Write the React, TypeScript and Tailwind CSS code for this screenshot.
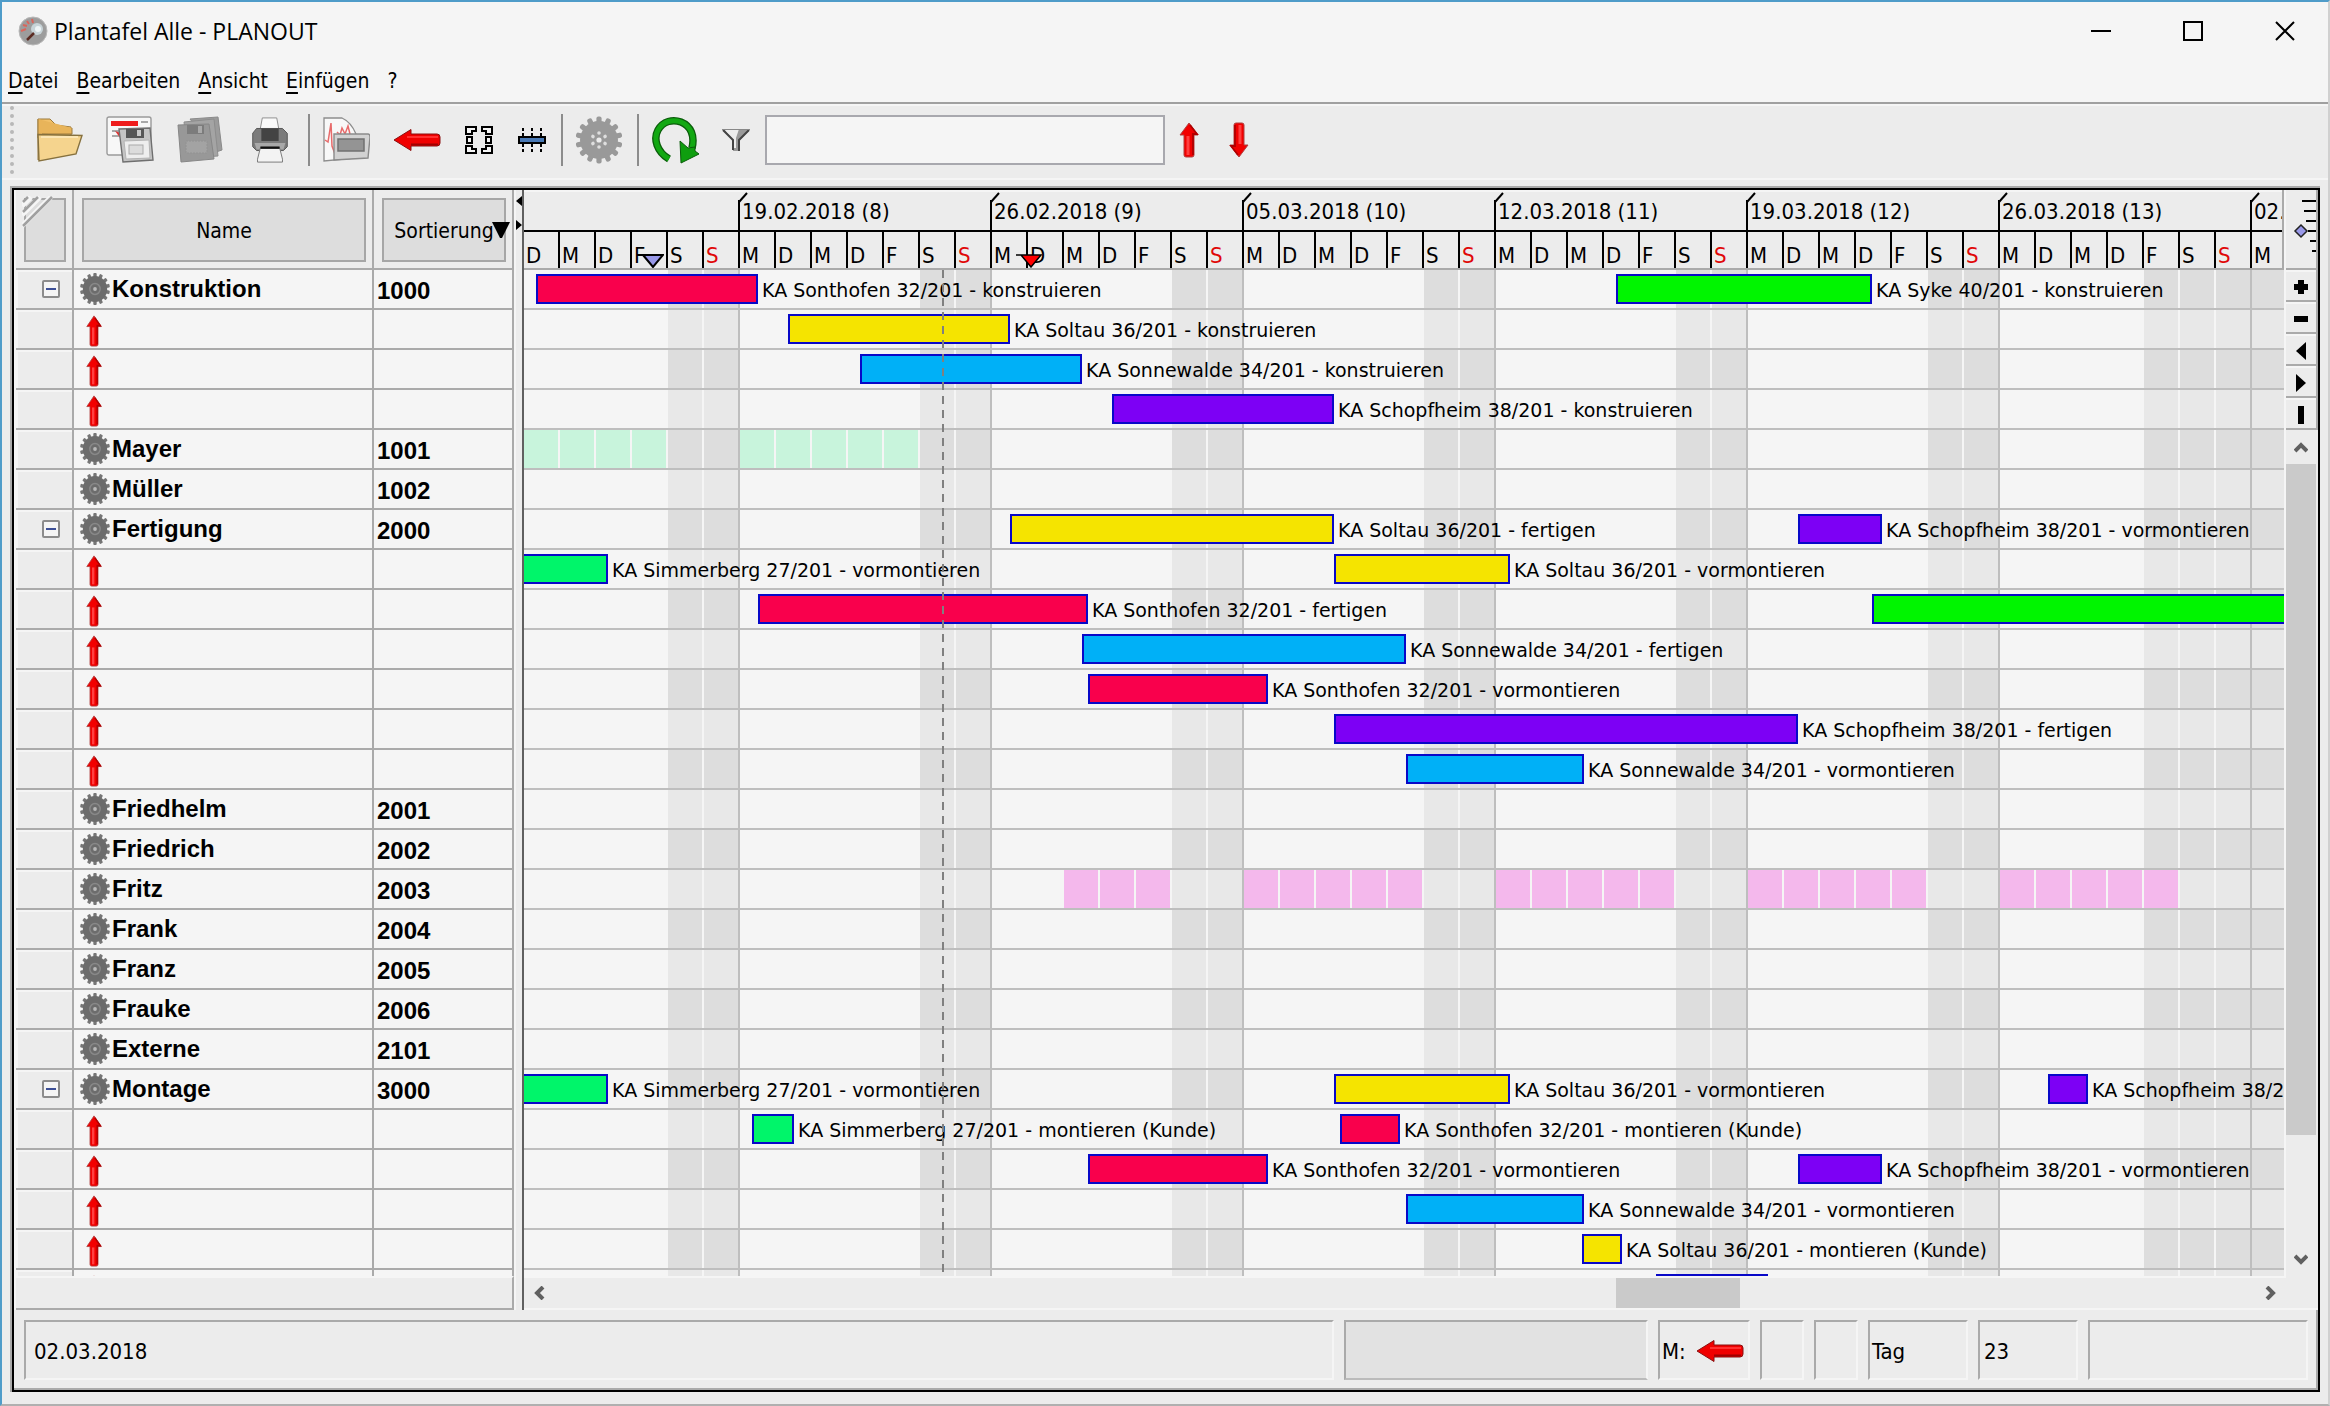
import React from 'react';
import clsx from 'clsx';

interface Bar {
  start: number;
  width: number;
  color: string;
  label?: string;
}

interface Row {
  name?: string;
  sort?: string;
  open?: boolean;
  bars?: Bar[];
  capacity?: { color: string; days: number[] };
}

const RED = 'bg-[#f9004c]';
const YELLOW = 'bg-[#f5e400]';
const BLUE = 'bg-[#00b0f7]';
const VIOLET = 'bg-[#7d00f5]';
const GREEN = 'bg-[#00f500]';
const MINT = 'bg-[#00f56a]';

const UI_FONT = "font-['DejaVu_Sans_Condensed','DejaVu_Sans',sans-serif]";

// bar positions are pixels from the left edge of the chart, one day is 36px
const ROWS: Row[] = [
  {
    name: 'Konstruktion',
    sort: '1000',
    open: true,
    bars: [
      { start: 12, width: 222, color: RED, label: 'KA Sonthofen 32/201 - konstruieren' },
      { start: 1092, width: 256, color: GREEN, label: 'KA Syke 40/201 - konstruieren' },
    ],
  },
  { bars: [{ start: 264, width: 222, color: YELLOW, label: 'KA Soltau 36/201 - konstruieren' }] },
  { bars: [{ start: 336, width: 222, color: BLUE, label: 'KA Sonnewalde 34/201 - konstruieren' }] },
  { bars: [{ start: 588, width: 222, color: VIOLET, label: 'KA Schopfheim 38/201 - konstruieren' }] },
  { name: 'Mayer', sort: '1001', capacity: { color: 'bg-[#c8f4dc]', days: [0, 1, 2, 3, 6, 7, 8, 9, 10] } },
  { name: 'Müller', sort: '1002' },
  {
    name: 'Fertigung',
    sort: '2000',
    open: true,
    bars: [
      { start: 486, width: 324, color: YELLOW, label: 'KA Soltau 36/201 - fertigen' },
      { start: 1274, width: 84, color: VIOLET, label: 'KA Schopfheim 38/201 - vormontieren' },
    ],
  },
  {
    bars: [
      { start: -10, width: 94, color: MINT, label: 'KA Simmerberg 27/201 - vormontieren' },
      { start: 810, width: 176, color: YELLOW, label: 'KA Soltau 36/201 - vormontieren' },
    ],
  },
  {
    bars: [
      { start: 234, width: 330, color: RED, label: 'KA Sonthofen 32/201 - fertigen' },
      { start: 1348, width: 600, color: GREEN },
    ],
  },
  { bars: [{ start: 558, width: 324, color: BLUE, label: 'KA Sonnewalde 34/201 - fertigen' }] },
  { bars: [{ start: 564, width: 180, color: RED, label: 'KA Sonthofen 32/201 - vormontieren' }] },
  { bars: [{ start: 810, width: 464, color: VIOLET, label: 'KA Schopfheim 38/201 - fertigen' }] },
  { bars: [{ start: 882, width: 178, color: BLUE, label: 'KA Sonnewalde 34/201 - vormontieren' }] },
  { name: 'Friedhelm', sort: '2001' },
  { name: 'Friedrich', sort: '2002' },
  {
    name: 'Fritz',
    sort: '2003',
    capacity: {
      color: 'bg-[#f4b8ec]',
      days: [15, 16, 17, 20, 21, 22, 23, 24, 27, 28, 29, 30, 31, 34, 35, 36, 37, 38, 41, 42, 43, 44, 45],
    },
  },
  { name: 'Frank', sort: '2004' },
  { name: 'Franz', sort: '2005' },
  { name: 'Frauke', sort: '2006' },
  { name: 'Externe', sort: '2101' },
  {
    name: 'Montage',
    sort: '3000',
    open: true,
    bars: [
      { start: -10, width: 94, color: MINT, label: 'KA Simmerberg 27/201 - vormontieren' },
      { start: 810, width: 176, color: YELLOW, label: 'KA Soltau 36/201 - vormontieren' },
      { start: 1524, width: 40, color: VIOLET, label: 'KA Schopfheim 38/201 - vormontieren' },
    ],
  },
  {
    bars: [
      { start: 228, width: 42, color: MINT, label: 'KA Simmerberg 27/201 - montieren (Kunde)' },
      { start: 816, width: 60, color: RED, label: 'KA Sonthofen 32/201 - montieren (Kunde)' },
    ],
  },
  {
    bars: [
      { start: 564, width: 180, color: RED, label: 'KA Sonthofen 32/201 - vormontieren' },
      { start: 1274, width: 84, color: VIOLET, label: 'KA Schopfheim 38/201 - vormontieren' },
    ],
  },
  { bars: [{ start: 882, width: 178, color: BLUE, label: 'KA Sonnewalde 34/201 - vormontieren' }] },
  { bars: [{ start: 1058, width: 40, color: YELLOW, label: 'KA Soltau 36/201 - montieren (Kunde)' }] },
  { bars: [{ start: 1132, width: 112, color: VIOLET }] },
];

const WEEKS = [
  '19.02.2018 (8)',
  '26.02.2018 (9)',
  '05.03.2018 (10)',
  '12.03.2018 (11)',
  '19.03.2018 (12)',
  '26.03.2018 (13)',
  '02.04.2018 (14)',
];

const DAY_LETTERS = ['D', 'M', 'D', 'F', 'S', 'S', 'M'];
// the chart starts on Tuesday 13.02.2018
const DAYS = Array.from({ length: 49 }, (_, i) => i);
const isSunday = (day: number) => day % 7 === 5;
// weekends, Good Friday and Easter Monday
const isFree = (day: number) => day % 7 === 4 || isSunday(day) || day === 45 || day === 48;

const GearIcon = ({ className }: { className?: string }) => (
  <svg viewBox="0 0 32 32" preserveAspectRatio="none" className={className} aria-hidden="true">
    {Array.from({ length: 14 }, (_, i) => (
      <rect key={i} x="14.2" y="0" width="3.6" height="6" rx="1" fill="#767676" transform={`rotate(${(i * 360) / 14} 16 16)`} />
    ))}
    <circle cx="16" cy="16" r="13" fill="#6c6c6c" />
    <circle cx="16" cy="16" r="5.5" fill="none" stroke="#888" strokeWidth="1.5" />
    <circle cx="16" cy="16" r="2" fill="#b8b8b8" />
  </svg>
);

const BigGearIcon = () => (
  <svg viewBox="0 0 48 48" className="size-12" aria-hidden="true">
    {Array.from({ length: 14 }, (_, i) => (
      <rect key={i} x="21.4" y="0.5" width="5.2" height="9" rx="2" fill="#999" transform={`rotate(${(i * 360) / 14} 24 24)`} />
    ))}
    <circle cx="24" cy="24" r="19" fill="#999" />
    {Array.from({ length: 6 }, (_, i) => (
      <circle key={i} cx="24" cy="17" r="1.8" fill="#dedede" transform={`rotate(${i * 60} 24 24)`} />
    ))}
    <circle cx="24" cy="24" r="2.6" fill="#ececec" />
  </svg>
);

const RedArrow = ({ className, down }: { className?: string; down?: boolean }) => (
  <svg viewBox="0 0 20 36" preserveAspectRatio="none" className={className} aria-hidden="true">
    <g transform={down ? 'rotate(180 10 18)' : undefined}>
      <path d="M10 1 L19 13 H15 V33 Q15 35 13 35 H7 Q5 35 5 33 V13 H1 Z" fill="#f20000" stroke="#b04040" strokeWidth="1" />
      <path d="M11 3 L18 12 H14 V33" fill="none" stroke="#b00000" strokeWidth="1.8" />
      <path d="M9 14 V33" stroke="#ff4040" strokeWidth="3" />
    </g>
  </svg>
);

const LeftArrow = () => (
  <svg viewBox="0 0 48 24" className="h-6 w-12" aria-hidden="true">
    <path d="M1 12 L18 1.5 V6 H44 Q47 6 47 9 V15 Q47 18 44 18 H18 V22.5 Z" fill="#f00000" stroke="#8a1010" />
    <path d="M18 16.500 H45" stroke="#a00000" strokeWidth="2" />
    <path d="M14 9 H45" stroke="#ff3030" strokeWidth="2" />
  </svg>
);

const FolderIcon = () => (
  <svg viewBox="0 0 48 48" className="size-12" aria-hidden="true">
    <path d="M2 3 L14 3 L20 9 L35 11 V22 H2 Z" fill="#f1c069" stroke="#9c7a3c" />
    <path d="M2 3 V44 L6 40 V18 H36 V12" fill="#e8b45a" stroke="#9c7a3c" />
    <path d="M2 18.500 L46 19.500 L40 38 L3 45 Z" fill="#f5d48e" stroke="#86713f" strokeWidth="1.4" />
    <path d="M5 21 H42" stroke="#fbe6b5" strokeWidth="2" />
  </svg>
);

const SaveReportIcon = () => (
  <svg viewBox="0 0 48 48" className="size-12" aria-hidden="true">
    <rect x="1" y="1" width="44" height="38" rx="2" fill="#f7f7f7" stroke="#9a9a9a" strokeWidth="1.4" />
    <rect x="5" y="5" width="27" height="5" fill="#ee1c1c" />
    <path d="M6 15 H16 M35 6 H42 M6 20 H14" stroke="#a8a8a8" strokeWidth="2" />
    <path d="M9 15 L15 17 V23 Z" fill="#d33" />
    <path d="M13 13 L44 12 L47 44 L17 46 Z" fill="#c4c4c4" stroke="#6f6f6f" strokeWidth="1.4" />
    <path d="M20 13 H38 V22 H20 Z" fill="#565656" />
    <path d="M31 14 H35 V20 H31 Z" fill="#c9c9c9" />
    <path d="M18 25 L43 24 L44 42 L20 43 Z" fill="#eee" stroke="#b4b4b4" />
    <rect x="23" y="29" width="14" height="9" fill="#dcdcdc" stroke="#aaa" />
  </svg>
);

const SaveAllIcon = () => (
  <svg viewBox="0 0 48 48" className="size-12" aria-hidden="true">
    <path d="M14 3 L42 1 L46 34 L40 36 Z" fill="#9b9b9b" stroke="#8a8a8a" />
    <path d="M8 6 L38 3 L42 40 L12 42 Z" fill="#a4a4a4" stroke="#8d8d8d" />
    <path d="M2 9 L33 8 L38 43 L5 46 Z" fill="#989898" stroke="#878787" />
    <path d="M11 9 H28 V18 H11 Z" fill="#7c7c7c" />
    <path d="M22 10 H26 V17 H22 Z" fill="#aaa" />
    <rect x="10" y="25" width="21" height="12" fill="#a3a3a3" stroke="#929292" strokeDasharray="2 1" />
  </svg>
);

const PrinterIcon = () => (
  <svg viewBox="0 0 48 50" className="h-12 w-12" aria-hidden="true">
    <path d="M16 2 H31 L34 18 H13 Z" fill="#fafafa" stroke="#8d8d8d" />
    <path d="M10 13 H37 L42 18 V32 L38 36 H10 L6 32 V18 Z" fill="#7b7b7b" stroke="#555" />
    <path d="M15 13 H33 V26 H15 Z" fill="#434343" />
    <path d="M8 28 H40 L38 35 H10 Z" fill="#a8a8a8" />
    <path d="M14 33 H34 L37 45 V48 H11 V45 Z" fill="#f3f3f3" stroke="#777" />
    <path d="M14 33 H34" stroke="#111" strokeWidth="2.500" />
  </svg>
);

const ChartIcon = () => (
  <svg viewBox="0 0 48 48" className="size-12" aria-hidden="true">
    <path d="M2 2 H20 Q29 6 34 18 V42 L2 45 Z" fill="#f8f8f8" stroke="#8d8d8d" strokeWidth="1.300" />
    <path d="M3 24 L6 26 L9 7 L10 30 L13 38 M15 16 L18 19 L20 12 L23 18 L26 10 L28 18" fill="none" stroke="#e86a6a" strokeWidth="1.500" />
    <path d="M12 18 H46 Q48 18 48 21 L46 42 L12 44 Z" fill="#d2d2d2" stroke="#8a8a8a" strokeWidth="1.400" />
    <rect x="16" y="23" width="26" height="12" fill="#949494" stroke="#707070" strokeWidth="1.500" />
  </svg>
);

const FitIcon = () => (
  <svg viewBox="0 0 30 30" className="size-[30px]" fill="#f5f5f5" stroke="#000" strokeWidth="2" shapeRendering="crispEdges" aria-hidden="true">
    <path d="M2 2 H12 V6 H8 V9 H2 Z M18 2 H28 V9 H22 V6 H18 Z" />
    <path d="M3 12 H8 V18 H3 Z M22 12 H27 V18 H22 Z" />
    <path d="M2 21 H8 V24 H12 V28 H2 Z M22 21 H28 V28 H18 V24 H22 Z" />
  </svg>
);

const RowHeightIcon = () => (
  <svg viewBox="0 0 30 30" className="size-[30px]" fill="none" stroke="#000" strokeWidth="2" shapeRendering="crispEdges" aria-hidden="true">
    <rect x="2" y="12" width="26" height="6" fill="#4878b4" />
    <path d="M6 3 V11 M15 3 V11 M24 3 V11 M6 19 V27 M15 19 V27 M24 19 V27" strokeDasharray="3 2" />
  </svg>
);

const RefreshIcon = () => (
  <svg viewBox="0 0 48 48" className="size-12" aria-hidden="true">
    <path d="M18 43 C6 36 2 23 7 14 C12 5 22 3 30 6 C40 10 44 20 41 32" fill="none" stroke="#0a5c0a" strokeWidth="7.500" />
    <path d="M18 43 C6 36 2 23 7 14 C12 5 22 3 30 6 C40 10 44 20 41 32" fill="none" stroke="#12a812" strokeWidth="5" />
    <path d="M29 25 L30 47 L48 38 L44 35 V31 L37 32 Z" fill="#0f9e0f" stroke="#0a5c0a" />
  </svg>
);

const FunnelIcon = () => (
  <svg viewBox="0 0 30 24" className="h-6 w-[30px]" aria-hidden="true">
    <path d="M1 1 H29 L19 12 V23 H12 V12 Z" fill="#9a9a9a" />
    <path d="M3 1 H18 L15 10 V20 H12 V12 Z" fill="#ededed" />
    <path d="M28 2 L18 12 V23 M2 2 L12 12 V22" fill="none" stroke="#444" strokeWidth="2" />
    <path d="M1 1.500 H29" stroke="#888" />
  </svg>
);

const AppIcon = () => (
  <svg viewBox="0 0 30 30" className="size-[30px]" aria-hidden="true">
    <circle cx="15" cy="15" r="14" fill="#9d9d9d" stroke="#b9b9b9" />
    <circle cx="19" cy="13" r="6" fill="#c8d4d8" />
    <circle cx="20" cy="13" r="3" fill="#eef4f6" />
    <path d="M9 24 L16 17" stroke="#5b2b22" strokeWidth="2.500" />
    <path d="M3 15 L8 13 M5 9 L9 10 M9 5 L11 8 M14 3 L15 7" stroke="#d9665c" strokeWidth="2" />
  </svg>
);

const ToolButton = ({ label, className, children }: { label: string; className?: string; children: React.ReactNode }) => (
  <button type="button" aria-label={label} className={clsx('flex shrink-0 items-center justify-center', className)}>
    {children}
  </button>
);

const Separator = () => <div className="mr-3 ml-3.5 h-[52px] w-0.5 shrink-0 bg-[#8c8c8c]" />;

const TitleBar = () => (
  <div className="flex h-[60px] items-center bg-[#f5f5f5] pb-0.5 pl-4">
    <AppIcon />
    <h1 className="ml-1.5 flex-1 font-['Open_Sans',sans-serif] text-[23px] leading-8">Plantafel Alle - PLANOUT</h1>
    <div className="flex gap-1.5">
      <button type="button" aria-label="Minimieren" className="flex w-[86px] justify-center">
        <svg className="size-5" viewBox="0 0 20 20"><path d="M0 10 H20" stroke="#000" strokeWidth="2" /></svg>
      </button>
      <button type="button" aria-label="Maximieren" className="flex w-[86px] justify-center">
        <svg className="size-5" viewBox="0 0 20 20"><rect x="1" y="1" width="18" height="18" fill="none" stroke="#000" strokeWidth="2" /></svg>
      </button>
      <button type="button" aria-label="Schließen" className="flex w-[86px] justify-center">
        <svg className="size-5" viewBox="0 0 20 20"><path d="M1 1 L19 19 M19 1 L1 19" stroke="#000" strokeWidth="2" /></svg>
      </button>
    </div>
  </div>
);

const MENU = ['Datei', 'Bearbeiten', 'Ansicht', 'Einfügen'];

const MenuBar = () => (
  <nav className="flex h-[42px] items-center gap-[18px] border-b-2 border-[#a0a0a0] bg-[#f5f5f5] pb-0.5 pl-1.5 text-[21px] leading-7">
    {MENU.map((item) => (
      <button key={item} type="button">
        <span className="underline decoration-2 underline-offset-4">{item[0]}</span>
        {item.slice(1)}
      </button>
    ))}
    <button type="button">?</button>
  </nav>
);

const Toolbar = () => (
  <div className="flex h-[76px] items-center border-y-2 border-[#f5f5f5] pb-1 pl-2">
    <div className="mr-[22px] h-[68px] w-0 border-l-4 border-dotted border-[#b8b8b8]" />
    <div className="flex gap-[22px]">
      <ToolButton label="Öffnen"><FolderIcon /></ToolButton>
      <ToolButton label="Bericht speichern"><SaveReportIcon /></ToolButton>
      <ToolButton label="Speichern"><SaveAllIcon /></ToolButton>
      <ToolButton label="Drucken"><PrinterIcon /></ToolButton>
    </div>
    <Separator />
    <div className="flex gap-[23px]">
      <ToolButton label="Auslastung"><ChartIcon /></ToolButton>
      <ToolButton label="Zurück"><LeftArrow /></ToolButton>
      <ToolButton label="Einpassen"><FitIcon /></ToolButton>
      <ToolButton label="Zeilenhöhe"><RowHeightIcon /></ToolButton>
    </div>
    <Separator />
    <ToolButton label="Einstellungen"><BigGearIcon /></ToolButton>
    <Separator />
    <ToolButton label="Aktualisieren"><RefreshIcon /></ToolButton>
    <ToolButton label="Filter" className="ml-[22px]"><FunnelIcon /></ToolButton>
    <input type="text" aria-label="Suchen" className="ml-3.5 h-[50px] w-[400px] border-2 border-[#a8a8ae] bg-[#f5f5f5] px-2 text-[21px]" />
    <ToolButton label="Vorheriger Treffer" className="ml-3.5"><RedArrow className="h-9 w-5" /></ToolButton>
    <ToolButton label="Nächster Treffer" className="ml-[30px]"><RedArrow className="h-9 w-5" down /></ToolButton>
  </div>
);

const HeaderBox = ({ children }: { children?: React.ReactNode }) => (
  <div className="h-[78px] pt-2 pr-1.5 pb-1.5 pl-2">
    <div className="relative flex h-16 items-center justify-center border-2 border-[#a6a6a6] bg-[#ddd] pt-1">{children}</div>
  </div>
);

const cell = 'border-r-2 border-b-2 border-[#aaa] p-0';

const ResourceTable = () => (
  <div className="flex w-[500px] shrink-0 flex-col border-l-2 border-[#f5f5f5]">
    <div className="min-h-0 flex-1 overflow-hidden">
      <table className="w-full table-fixed border-separate border-spacing-0">
        <colgroup>
          <col className="w-[58px]" />
          <col className="w-[300px]" />
          <col className="w-[140px]" />
        </colgroup>
        <thead>
          <tr className="text-[21px]">
            <th className={clsx(cell, 'font-normal')}>
              <HeaderBox>
                <svg className="absolute -top-1 -left-1 size-9" viewBox="0 0 36 36" fill="none" aria-hidden="true">
                  <path d="M0 10 L9 1 M0 19 L18 1 M0 30 L29 1" stroke="#f5f5f5" strokeWidth="5" />
                  <path d="M1 6 L6 1 M1 16 L16 1 M1 30 L30 1" stroke="#a0a0a0" strokeWidth="2.500" />
                </svg>
              </HeaderBox>
            </th>
            <th className={clsx(cell, 'font-normal')}>
              <HeaderBox>Name</HeaderBox>
            </th>
            <th className={clsx(cell, 'font-normal')}>
              <HeaderBox>
                Sortierung
                <svg className="absolute top-[22px] -right-1.5 h-4 w-[18px]" viewBox="0 0 18 16" aria-hidden="true">
                  <path d="M0 0 H18 L10 16 H8 Z" fill="#000" />
                </svg>
              </HeaderBox>
            </th>
          </tr>
        </thead>
        <tbody className="font-['Liberation_Sans',Arial,sans-serif] text-2xl leading-7 font-bold">
          {ROWS.map((row, i) => (
            <tr key={i} className="bg-[#f5f5f5]">
              <td className={clsx(cell, 'h-10 bg-[#ececec] shadow-[inset_2px_2px_0_#f5f5f5]')}>
                {row.open && (
                  <button type="button" aria-label={`${row.name} zuklappen`} className="ml-[26px] flex size-[18px] items-center justify-center rounded-xs border-2 border-[#8c8c8c] bg-[#f5f5f5]">
                    <span className="h-0.5 w-2.5 bg-[#3c4f96]" />
                  </button>
                )}
              </td>
              <td className={clsx(cell, 'h-10')}>
                {row.name ? (
                  <div className="flex h-[38px] items-center pl-1.5">
                    <GearIcon className="h-8 w-[30px]" />
                    <span className="ml-0.5">{row.name}</span>
                  </div>
                ) : (
                  <div className="flex h-[38px] items-center pt-1 pl-3">
                    <RedArrow className="h-8 w-4" />
                  </div>
                )}
              </td>
              <td className={clsx(cell, 'h-10')}>
                <div className="flex h-[38px] items-center pt-1 pl-[3px]">{row.sort}</div>
              </td>
            </tr>
          ))}
        </tbody>
      </table>
    </div>
    <div className="h-[34px] shrink-0 border-t-2 border-r-2 border-b-2 border-t-[#f5f5f5] border-r-[#aaa] border-b-[#aaa]" />
  </div>
);

const Splitter = () => (
  <div className="flex w-2.5 shrink-0 flex-col border-r-2 border-l-2 border-r-[#606060] border-l-[#f5f5f5] pt-1.5">
    <svg className="h-9 w-1.5" viewBox="0 0 6 36" aria-hidden="true">
      <path d="M6 0 V10 L0 5 Z M0 24 V34 L6 29 Z" fill="#000" />
    </svg>
  </div>
);

const WeekTick = () => (
  <svg className="h-10 w-2.5 shrink-0" viewBox="0 0 10 40" aria-hidden="true">
    <path d="M1 10 L9 1" stroke="#000" strokeWidth="2" />
  </svg>
);

const TimeScale = () => (
  <div className="relative h-20 shrink-0 overflow-hidden border-t-2 border-b-2 border-t-[#f5f5f5] border-b-[#aaa] text-[22px]">
    <div className="flex h-10 border-b-2 border-black">
      <div className="flex w-[216px] shrink-0 flex-col justify-end">
        <div className="h-[30px] self-end border-r-2 border-black" />
      </div>
      {WEEKS.map((week) => (
        <div key={week} className="flex w-[252px] shrink-0">
          <div className="-ml-0.5"><WeekTick /></div>
          <span className="-ml-1.5 flex-1 pt-1.5 leading-7 whitespace-nowrap">{week}</span>
          <div className="h-[30px] self-end border-r-2 border-black" />
        </div>
      ))}
    </div>
    <div className="flex h-9">
      {DAYS.map((day) => (
        <div key={day} className={clsx('w-9 shrink-0 border-r-2 border-black pt-3 pl-0.5 leading-6', isSunday(day) && 'text-[#e00808]')}>
          {DAY_LETTERS[day % 7]}
        </div>
      ))}
    </div>
    <svg className="absolute bottom-0 left-[114px] h-3.5 w-[26px]" viewBox="0 0 26 14" aria-hidden="true">
      <path d="M0 1 H25 L15 13 L5 1" fill="#9898e8" stroke="#000" strokeWidth="2" />
    </svg>
    <svg className="absolute bottom-0 left-[492px] h-3.5 w-[26px]" viewBox="0 0 26 14" aria-hidden="true">
      <path d="M0 1 H25 L15 13 L5 1" fill="#f00" stroke="#000" strokeWidth="1.500" />
    </svg>
  </div>
);

const GanttRow = ({ row, index }: { row: Row; index: number }) => (
  <div className="relative flex h-10 border-b-2 border-[#bebebe] bg-[#f5f5f5]">
    {DAYS.map((day) => (
      <div
        key={day}
        className={clsx(
          'h-full w-9 shrink-0 border-r-2',
          isSunday(day) ? 'border-[#bebebe]' : 'border-[#f5f5f5]',
          isFree(day) && !row.capacity?.days.includes(day) && (index % 2 ? 'bg-[#e8e8e8]' : 'bg-[#ddd]'),
          row.capacity?.days.includes(day) && row.capacity.color,
        )}
      />
    ))}
    {row.bars?.map((bar) => (
      <div key={bar.start} className="absolute top-1 flex items-center gap-1" style={{ left: bar.start }}>
        <div className={clsx('h-[30px] border-2 border-[#0808c8]', bar.color)} style={{ width: bar.width }} />
        {bar.label && <span className="pt-0.5 text-[19px] leading-6 whitespace-nowrap">{bar.label}</span>}
      </div>
    ))}
  </div>
);

const Chevron = ({ d }: { d: string }) => (
  <svg viewBox="0 0 14 14" className="size-3.5" fill="none" stroke="#606060" strokeWidth="4" aria-hidden="true">
    <path d={d} />
  </svg>
);

const Chart = () => (
  <div className="flex min-w-0 flex-1 flex-col">
    <div className="flex min-h-0 flex-1 flex-col border-r-2 border-[#f5f5f5]">
      <div className="border-r-2 border-[#aaa]">
        <TimeScale />
      </div>
      <div className="relative min-h-0 flex-1 overflow-hidden font-['DejaVu_Sans',sans-serif]">
        {ROWS.map((row, i) => (
          <GanttRow key={i} row={row} index={i} />
        ))}
        <svg className="absolute top-0 left-[418px] h-full w-0.5" aria-hidden="true">
          <line x1="1" y1="0" x2="1" y2="100%" stroke="#808080" strokeWidth="2" strokeDasharray="8 6" />
        </svg>
      </div>
    </div>
    <div className="flex h-[34px] shrink-0 items-center justify-between border-y-2 border-[#f5f5f5] px-2">
      <button type="button" aria-label="Nach links"><Chevron d="M11 1 L5 7 L11 13" /></button>
      <div className="flex h-full flex-1 justify-end">
        <div className="mr-[30.5%] h-full w-[124px] bg-[#cacaca]" />
      </div>
      <button type="button" aria-label="Nach rechts"><Chevron d="M3 1 L9 7 L3 13" /></button>
    </div>
  </div>
);

const SIDE_BUTTONS = [
  { label: 'Vergrößern', d: 'M4 0 H10 V4 H14 V10 H10 V14 H4 V10 H0 V4 H4 Z' },
  { label: 'Verkleinern', d: 'M0 4 H14 V10 H0 Z' },
  { label: 'Zurückblättern', d: 'M12 -2 V16 L2 7 Z' },
  { label: 'Vorblättern', d: 'M2 -2 V16 L12 7 Z' },
  { label: 'Heute', d: 'M4 -2 H10 V16 H4 Z' },
];

const SideBar = () => (
  <div className="flex w-8 shrink-0 flex-col">
    <div className="h-20 shrink-0 border-r-2 border-b-2 border-[#aaa]">
      <svg className="h-[78px] w-[30px]" viewBox="0 0 30 78" aria-hidden="true">
        <path d="M16 11 H30 M18 21 H30 M20 31 H30 M22 41 H30 M24 51 H30 M26 61 H30" stroke="#000" strokeWidth="2" />
        <path d="M15 35 L21 41 L15 47 L9 41 Z" fill="#9898e8" stroke="#222" strokeWidth="1.500" />
      </svg>
    </div>
    {SIDE_BUTTONS.map(({ label, d }) => (
      <button key={label} type="button" aria-label={label} className="flex h-8 shrink-0 items-center justify-center border-r-2 border-b-2 border-[#aaa] pt-1 shadow-[inset_0_2px_0_#f5f5f5]">
        <svg viewBox="0 0 14 14" className="size-3.5 overflow-visible" aria-hidden="true">
          <path d={d} />
        </svg>
      </button>
    ))}
    <div className="mr-0.5 flex min-h-0 flex-1 flex-col items-center">
      <button type="button" aria-label="Nach oben" className="flex h-[34px] shrink-0 items-center"><Chevron d="M1 11 L7 5 L13 11" /></button>
      <div className="min-h-0 w-full flex-1">
        <div className="h-[86%] bg-[#cacaca]" />
      </div>
      <button type="button" aria-label="Nach unten" className="flex h-8 shrink-0 items-center"><Chevron d="M1 3 L7 9 L13 3" /></button>
    </div>
    <div className="h-[34px] shrink-0 border-b-2 border-[#f5f5f5]" />
  </div>
);

const StatusCell = ({ className, children }: { className?: string; children?: React.ReactNode }) => (
  <div className={clsx('flex h-[60px] shrink-0 items-center border-2 border-t-[#aaa] border-r-[#f5f5f5] border-l-[#aaa] pt-0.5 pl-0.5', className)}>
    {children}
  </div>
);

const StatusBar = () => (
  <footer className="flex h-20 shrink-0 items-start gap-2.5 border-r-2 border-b-2 border-[#aaa] pt-2.5 pr-2 pl-2.5 text-[22px]">
    <StatusCell className="min-w-0 flex-1 border-b-[#f5f5f5]">
      <span className="pl-1.5">02.03.2018</span>
    </StatusCell>
    <StatusCell className="w-[304px] border-b-[#bbb] bg-[#e2e2e2]" />
    <StatusCell className="w-[92px] gap-2.5 border-b-[#f5f5f5]">
      M:
      <LeftArrow />
    </StatusCell>
    <StatusCell className="w-[44px] border-b-[#f5f5f5]" />
    <StatusCell className="w-[44px] border-b-[#f5f5f5]" />
    <StatusCell className="w-[100px] border-b-[#f5f5f5]">Tag</StatusCell>
    <StatusCell className="w-[100px] border-b-[#f5f5f5]">
      <span className="pl-0.5">23</span>
    </StatusCell>
    <StatusCell className="w-[220px] border-b-[#f5f5f5]" />
  </footer>
);

export default function App() {
  return (
    <div className={clsx('flex h-screen flex-col border-2 border-t-[#4f9cc9] border-r-[#d0d0d0] border-b-[#b0b0b0] border-l-[#4f9cc9] bg-[#ececec] text-black', UI_FONT)}>
      <TitleBar />
      <MenuBar />
      <Toolbar />
      <main className="mx-2 mt-1.5 mb-3 flex min-h-0 flex-1 flex-col border-t-2 border-l-2 border-[#aaa]">
        <div className="flex min-h-0 flex-1 flex-col border-2 border-black">
          <div className="flex min-h-0 flex-1">
            <ResourceTable />
            <Splitter />
            <Chart />
            <SideBar />
          </div>
          <StatusBar />
        </div>
      </main>
    </div>
  );
}
